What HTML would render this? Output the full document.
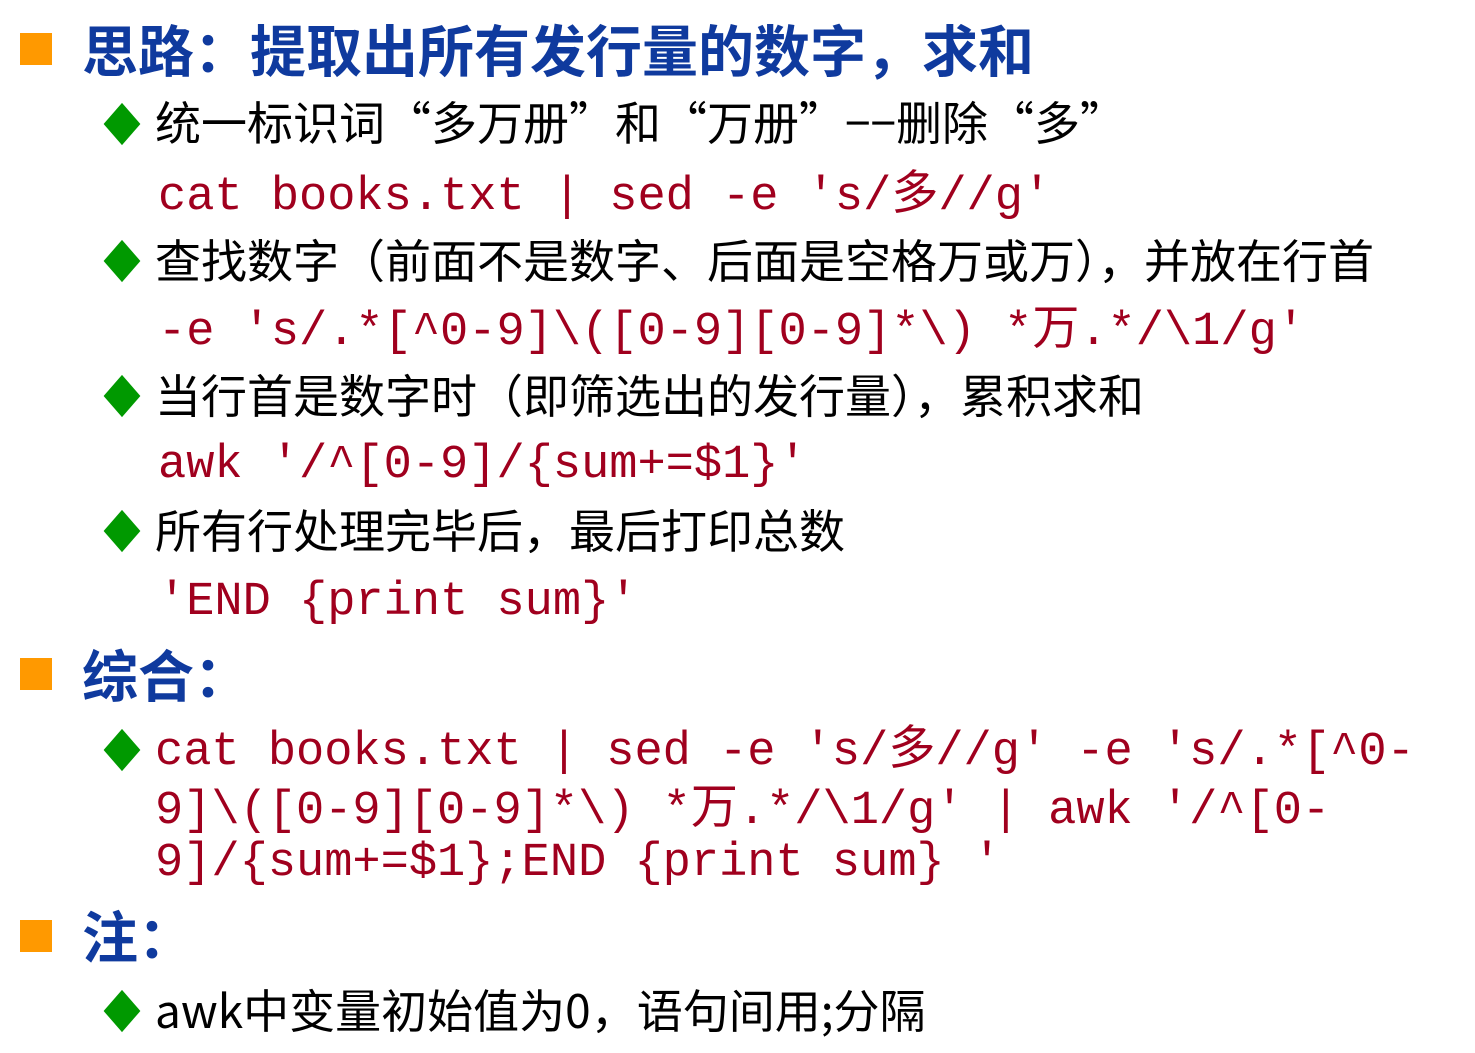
<!DOCTYPE html>
<html><head><meta charset="utf-8"><style>
body{margin:0;width:1475px;height:1053px;background:#fff;overflow:hidden;position:relative}
.l{position:absolute;white-space:pre;line-height:60px;height:60px}
.h{font:bold 56px "Noto Sans CJK SC","Liberation Sans",sans-serif;color:#0f3a9e;left:82px}
.t{font:46px "Noto Sans CJK SC","Liberation Sans",sans-serif;color:#000;left:155px}
.c{font:47px "Liberation Mono","Noto Sans CJK SC",monospace;color:#a0001e;left:158px}
.sq{position:absolute;left:20px;width:32px;height:32px;background:#f90}
.d{position:absolute;left:109px;width:26px;height:26px;background:#090;transform:scaleY(1.15) rotate(45deg)}
</style></head><body>
<div class="sq" style="top:33px"></div>
<div class="l h" style="top:8px">思路：提取出所有发行量的数字，求和</div>
<div class="d" style="top:111px"></div>
<div class="l t" style="top:88px">统一标识词“多万册”和“万册”−−删除“多”</div>
<div class="l c" style="top:154px">cat books.txt | sed -e 's/多//g'</div>
<div class="d" style="top:248px"></div>
<div class="l t" style="top:226px">查找数字（前面不是数字、后面是空格万或万），并放在行首</div>
<div class="l c" style="top:289px">-e 's/.*[^0-9]\([0-9][0-9]*\) *万.*/\1/g'</div>
<div class="d" style="top:383px"></div>
<div class="l t" style="top:361px">当行首是数字时（即筛选出的发行量），累积求和</div>
<div class="l c" style="top:439px">awk '/^[0-9]/{sum+=$1}'</div>
<div class="d" style="top:518px"></div>
<div class="l t" style="top:496px">所有行处理完毕后，最后打印总数</div>
<div class="l c" style="top:576px">'END {print sum}'</div>
<div class="sq" style="top:658px"></div>
<div class="l h" style="top:633px">综合：</div>
<div class="d" style="top:737px"></div>
<div class="l c" style="top:709px;left:155px">cat books.txt | sed -e 's/多//g' -e 's/.*[^0-</div>
<div class="l c" style="top:768px;left:155px">9]\([0-9][0-9]*\) *万.*/\1/g' | awk '/^[0-</div>
<div class="l c" style="top:837px;left:155px">9]/{sum+=$1};END {print sum} '</div>
<div class="sq" style="top:920px"></div>
<div class="l h" style="top:894px">注：</div>
<div class="d" style="top:998px"></div>
<div class="l t" style="top:976px">awk中变量初始值为0，语句间用;分隔</div>
</body></html>
